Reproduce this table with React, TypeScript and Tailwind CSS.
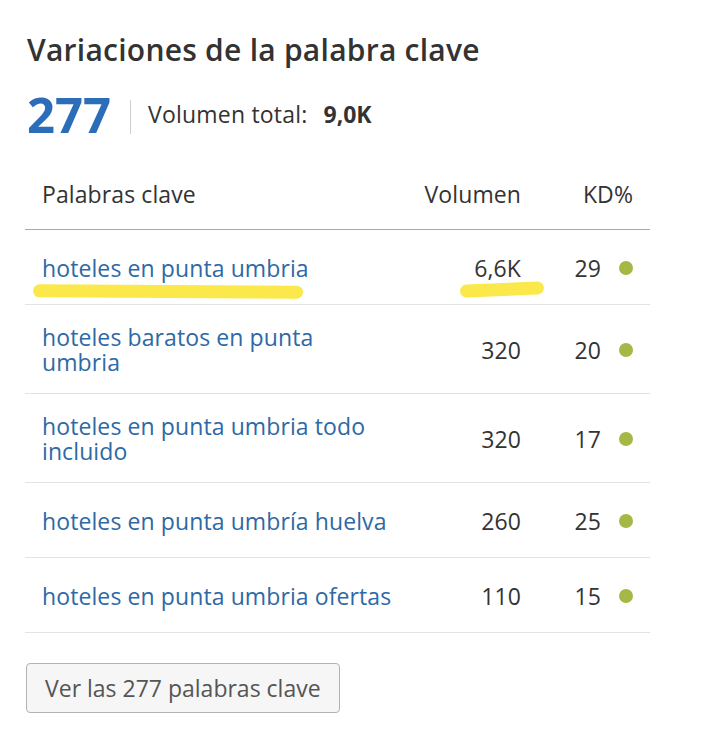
const rows = [
    { keyword: "hoteles en punta umbria", volume: "6,6K", kd: 29, marked: true },
    { keyword: "hoteles baratos en punta umbria", volume: "320", kd: 20 },
    { keyword: "hoteles en punta umbria todo incluido", volume: "320", kd: 17 },
    { keyword: "hoteles en punta umbría huelva", volume: "260", kd: 25 },
    { keyword: "hoteles en punta umbria ofertas", volume: "110", kd: 15 },
];

const App = () => {
    return (
        <div className="min-h-[736px] bg-white font-['Open_Sans',sans-serif] text-[#333]">
            <div className="px-[25px] pt-[32px] w-[625px] box-content">
                <h2 className="pl-[2px] text-[30px] leading-[36px] font-semibold tracking-[0.25px] text-[#333]">Variaciones de la palabra clave</h2>

                <div className="flex items-center mt-[22px] h-[49px] pl-[2px]">
                    <span className="text-[49px] leading-none font-bold text-[#2c6db9]">277</span>
                    <div className="w-px h-[34px] mt-[5px] bg-[#cfcfcf] ml-[19px] mr-[17px]" />
                    <span className="text-[23px] tracking-[0.2px]">Volumen total:</span>
                    <span className="text-[23px] font-bold ml-[16px]">9,0K</span>
                </div>

                <div className="mt-[21px] text-[23px] tracking-[0.1px]">
                    <div className="flex items-center h-[70px] border-b border-[#a9a9a9] px-[17px]">
                        <div className="flex-1">Palabras clave</div>
                        <div className="text-right">Volumen</div>
                        <div className="w-[112px] text-right">KD%</div>
                    </div>

                    {rows.map((row) => (
                        <div key={row.keyword} className="relative flex items-center min-h-[75px] pt-[20px] pb-[18px] border-b border-[#e3e3e3] leading-[25px] px-[17px]">
                            <a href="#" className="w-[352px] text-[#2e69a5]">{row.keyword}</a>
                            <div className="flex-1 text-right">{row.volume}</div>
                            <div className="w-[112px] flex items-center justify-end gap-[18px]">
                                <span>{row.kd}</span>
                                <span className="w-[14px] h-[14px] rounded-full bg-[#a4b846]" />
                            </div>
                            {row.marked && (
                                <>
                                    <span className="absolute left-[8px] top-[55px] w-[270px] h-[13px] rounded-full bg-[#fbe84b] rotate-[0.3deg]" />
                                    <span className="absolute left-[435px] top-[53px] w-[84px] h-[13px] rounded-full bg-[#fbe84b] -rotate-[2.5deg]" />
                                </>
                            )}
                        </div>
                    ))}
                </div>

                <button className="mt-[30px] ml-[1px] h-[50px] px-[18px] rounded-[4px] border border-[#b3b3b3] bg-[#f6f6f6] text-[23px] text-[#555]">
                    Ver las 277 palabras clave
                </button>
            </div>
        </div>
    );
};

export default App;
